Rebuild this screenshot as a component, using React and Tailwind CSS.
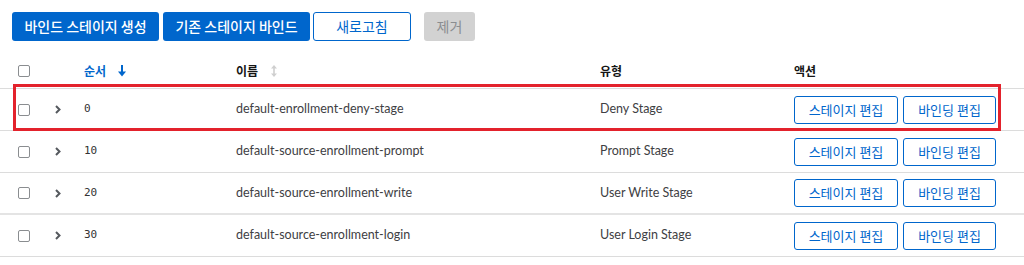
import React from 'react';

const KR = "font-['Noto_Sans_CJK_KR','Noto_Sans',sans-serif]";

const rows = [
  { order: '0', name: 'default-enrollment-deny-stage', type: 'Deny Stage' },
  { order: '10', name: 'default-source-enrollment-prompt', type: 'Prompt Stage' },
  { order: '20', name: 'default-source-enrollment-write', type: 'User Write Stage' },
  { order: '30', name: 'default-source-enrollment-login', type: 'User Login Stage' },
];

function Checkbox() {
  return <span className="block w-[12px] h-[12px] border border-[#8a8d90] rounded-[2px] bg-white" />;
}

function Chevron() {
  return (
    <svg width="6" height="9" viewBox="0 0 6 9">
      <polyline points="1,1 4.5,4.5 1,8" fill="none" stroke="#55595e" strokeWidth="2" />
    </svg>
  );
}

function SortDown() {
  return (
    <svg width="8" height="12" viewBox="0 0 8 12">
      <rect x="3" y="0" width="2" height="7" fill="#0066cc" />
      <polygon points="0,6.5 8,6.5 4,11.5" fill="#0066cc" />
    </svg>
  );
}

function SortBoth() {
  return (
    <svg width="6" height="12" viewBox="0 0 6 12">
      <polygon points="3,0 6,3.5 0,3.5" fill="#cfcfcf" />
      <rect x="2.2" y="3" width="1.6" height="6" fill="#cfcfcf" />
      <polygon points="0,8.5 6,8.5 3,12" fill="#cfcfcf" />
    </svg>
  );
}

const cols = 'grid grid-cols-[37px_29px_152px_364px_194px_1fr] items-center pl-[18px]';

function App() {
  return (
    <div className="w-[1024px] h-[265px] bg-white overflow-hidden font-['Lato',sans-serif] text-[#3e4043]">
      {/* 툴바 */}
      <div className={`flex items-center pt-[12px] pl-[12px] ${KR} text-[14px]`}>
        <button className="h-[29px] w-[147px] bg-[#0066cc] text-white rounded-[3px] font-medium">바인드 스테이지 생성</button>
        <button className="h-[29px] w-[147px] ml-[4px] bg-[#0066cc] text-white rounded-[3px] font-medium">기존 스테이지 바인드</button>
        <button className="h-[29px] w-[98px] ml-[3px] border border-[#0066cc] text-[#0066cc] rounded-[3px] bg-white">새로고침</button>
        <button className="h-[29px] w-[51px] ml-[13px] bg-[#d2d2d2] text-[#8a8d90] rounded-[3px]">제거</button>
      </div>

      {/* 헤더 */}
      <div className={`${cols} mt-[13px] h-[35px] border-b border-[#dcdcdc] ${KR} text-[12px] font-semibold text-[#151515]`}>
        <Checkbox />
        <span />
        <span className="flex items-center text-[#0066cc]">
          순서<span className="ml-[12px] flex"><SortDown /></span>
        </span>
        <span className="flex items-center">
          이름<span className="ml-[13px] flex"><SortBoth /></span>
        </span>
        <span>유형</span>
        <span>액션</span>
      </div>

      {/* 행 */}
      {rows.map((r, i) => (
        <div
          key={r.order}
          className={`relative ${cols} h-[42px] ${i === 2 ? 'border-b-2 border-[#e4e4e4]' : 'border-b border-[#dcdcdc]'}`}
        >
          <Checkbox />
          <span className="flex"><Chevron /></span>
          <span className="font-['DejaVu_Sans_Mono',monospace] text-[11px] text-[#333]">{r.order}</span>
          <span className="text-[12.5px]">{r.name}</span>
          <span className="text-[12.5px]">{r.type}</span>
          <div className={`flex gap-[5px] ${KR} text-[13px] text-[#0066cc]`}>
            <button className="h-[28px] w-[104px] border border-[#0066cc] rounded-[3px] bg-white">스테이지 편집</button>
            <button className="h-[28px] w-[93px] border border-[#0066cc] rounded-[3px] bg-white">바인딩 편집</button>
          </div>
          {i === 0 && (
            <div className="absolute left-[13px] top-[-5px] w-[988px] h-[47px] border-[3px] border-[#e3222c] pointer-events-none" />
          )}
        </div>
      ))}
    </div>
  );
}

export default App;
